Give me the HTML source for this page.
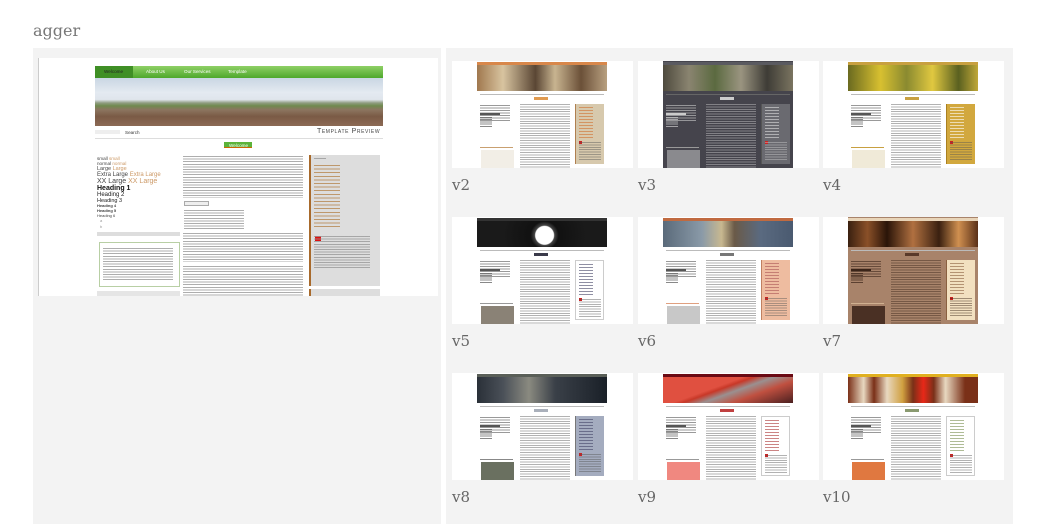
<!DOCTYPE html>
<html><head><meta charset="utf-8"><style>
*{margin:0;padding:0;box-sizing:border-box}
body{width:1043px;height:524px;background:#fff;position:relative;overflow:hidden;font-family:"Liberation Sans",sans-serif}
.title{position:absolute;left:33px;top:21px;font:16px "DejaVu Serif","Liberation Serif",serif;color:#777}
.panel{position:absolute;background:#f3f3f3;top:48px;height:476px}
.abs{position:absolute}
.t{font-size:4.6px;line-height:5.2px;color:#444}
.lines{background:repeating-linear-gradient(#999 0 1px,transparent 1px 2.6px);opacity:.8}
.th{position:absolute;width:181px;height:107px;background:#fff;overflow:hidden}
.lab{position:absolute;font:15px "DejaVu Serif","Liberation Serif",serif;color:#666}
.pg{position:absolute;left:25px;top:0;width:130px;height:107px;background:var(--bg)}
.pg .nav{position:absolute;left:0;top:1px;width:130px;height:3px;background:var(--nav)}
.pg .hd{position:absolute;left:0;top:4px;width:130px;height:26px;background:var(--hdr)}
.pg .sr{position:absolute;left:3px;top:33px;width:124px;height:1px;background:#bbb}
.pg .tab{position:absolute;left:57px;top:36px;width:14px;height:3px;background:var(--tab)}
.pg .l1{position:absolute;left:3px;top:44px;width:30px;height:16px;background:repeating-linear-gradient(var(--tx) 0 1px,transparent 1px 2.5px);opacity:.6}
.pg .h1{position:absolute;left:3px;top:52px;width:20px;height:2px;background:var(--tx)}
.pg .l2{position:absolute;left:3px;top:56px;width:12px;height:11px;background:repeating-linear-gradient(var(--tx) 0 1px,transparent 1px 2.2px);opacity:.7}
.pg .bar{position:absolute;left:3px;top:86px;width:33px;height:1px;background:#999}
.pg .box{position:absolute;left:4px;top:89px;width:33px;height:18px;background:var(--box)}
.pg .mid{position:absolute;left:43px;top:43px;width:50px;height:64px;background:repeating-linear-gradient(var(--tx) 0 1px,transparent 1px 2.4px);opacity:.45}
.pg .sd{position:absolute;left:98px;top:43px;width:29px;height:60px;background:var(--side);border-left:1px solid var(--sb)}
.pg .sd i{position:absolute;left:3px;top:3px;width:14px;height:32px;background:repeating-linear-gradient(var(--lk) 0 1px,transparent 1px 3px);opacity:.6}
.pg .sd b{position:absolute;left:3px;top:38px;width:22px;height:18px;background:repeating-linear-gradient(var(--tx) 0 1px,transparent 1px 2.4px);opacity:.45}
.pg .sd u{position:absolute;left:3px;top:37px;width:3px;height:3px;background:#c22}
</style></head><body>
<div class="title">agger</div>
<div class="panel" style="left:33px;width:408px"></div>
<div class="panel" style="left:446px;width:567px"></div>

<div class="abs" style="left:38px;top:58px;width:400px;height:238px;background:#fff;border-left:1px solid #ccc"></div>
<div class="abs" style="left:95px;top:66px;width:288px;height:12px;background:linear-gradient(#8fd066,#4ea82c)"></div>
<div class="abs" style="left:95px;top:66px;width:38px;height:12px;background:#3f8f25"></div>
<div class="abs t" style="left:104px;top:69px;color:#222">Welcome</div>
<div class="abs t" style="left:146px;top:69px;color:#fff">About Us</div>
<div class="abs t" style="left:184px;top:69px;color:#fff">Our Services</div>
<div class="abs t" style="left:228px;top:69px;color:#fff">Template</div>
<div class="abs" style="left:95px;top:78px;width:288px;height:48px;background:linear-gradient(#c9d6e3 0%,#e4eaf1 30%,#dfe5ec 45%,#8f9c80 52%,#6f8a4e 58%,#8c7560 66%,#7a5a45 80%,#8c6a55 100%)"></div>
<div class="abs" style="left:95px;top:130px;width:25px;height:4px;background:#eee"></div>
<div class="abs t" style="left:125px;top:130px;color:#333">Search</div>
<div class="abs" style="left:317px;top:128px;font-size:7px;letter-spacing:.6px;color:#444;font-variant:small-caps">Template Preview</div>
<div class="abs" style="left:95px;top:138px;width:288px;height:1px;background:#ddd"></div>
<div class="abs" style="left:224px;top:142px;width:28px;height:6px;background:#5cb33a;border-bottom:1px solid #c60"></div>
<div class="abs t" style="left:229px;top:143px;color:#fff">Welcome</div>
<div class="abs t" style="left:97px;top:156px;line-height:5px">small <span style="color:#c96">small</span><br>normal <span style="color:#c96">normal</span><br><span style="font-size:5.5px">Large <span style="color:#c96">Large</span></span><br><span style="font-size:6px">Extra Large <span style="color:#c96">Extra Large</span></span><br><span style="font-size:7px;line-height:7px">XX Large <span style="color:#c96">XX Large</span></span></div>
<div class="abs" style="left:97px;top:185px;font-size:7px;font-weight:bold;color:#111">Heading 1</div>
<div class="abs" style="left:97px;top:192px;font-size:6px;color:#222">Heading 2</div>
<div class="abs" style="left:97px;top:198px;font-size:5.5px;color:#222">Heading 3</div>
<div class="abs t" style="left:97px;top:204px;font-weight:bold;line-height:4.5px;font-size:4px">Heading 4<br>Heading 5</div>
<div class="abs t" style="left:97px;top:213px;font-size:4px">Heading 6</div>
<div class="abs t" style="left:100px;top:218px;font-size:4px;line-height:6px;color:#999">a<br>b</div>
<div class="abs" style="left:97px;top:232px;width:83px;height:4px;background:#ddd"></div>
<div class="abs" style="left:99px;top:242px;width:81px;height:45px;border:1px solid #b8cfa4;background:#fff"></div>
<div class="abs lines" style="left:103px;top:248px;width:70px;height:32px"></div>
<div class="abs" style="left:97px;top:291px;width:83px;height:5px;background:#e5e5e5"></div>
<div class="abs lines" style="left:183px;top:156px;width:120px;height:42px"></div>
<div class="abs" style="left:184px;top:201px;width:25px;height:5px;background:#eee;border:1px solid #aaa"></div>
<div class="abs lines" style="left:184px;top:210px;width:60px;height:19px"></div>
<div class="abs lines" style="left:183px;top:233px;width:120px;height:29px"></div>
<div class="abs lines" style="left:183px;top:266px;width:120px;height:30px"></div>
<div class="abs" style="left:309px;top:155px;width:71px;height:131px;background:#ddd;border-left:2px solid #a86a2c"></div>
<div class="abs lines" style="left:314px;top:158px;width:12px;height:2px"></div>
<div class="abs" style="left:314px;top:165px;width:26px;height:64px;background:repeating-linear-gradient(#b07a3c 0 1px,transparent 1px 3.6px);opacity:.7"></div>
<div class="abs" style="left:315px;top:236px;width:6px;height:5px;background:#d11"></div>
<div class="abs lines" style="left:314px;top:236px;width:56px;height:34px"></div>
<div class="abs" style="left:309px;top:289px;width:71px;height:7px;background:#ddd;border-left:2px solid #a86a2c"></div>

<div class="th" style="left:452px;top:61px"><div class="pg" style="--bg:#fff;--nav:#d8874a;--hdr:linear-gradient(90deg,#a0784e,#d8c4a0 20%,#5a4634 45%,#c8b490 60%,#6b5038 80%,#b8a080);--tab:#e09a50;--tx:#555;--box:#f2eee6;--side:#d7c9ad;--sb:#b08050;--lk:#d07030"><div class="nav"></div><div class="hd"></div><div class="sr"></div><div class="tab"></div><div class="l1"></div><div class="h1"></div><div class="l2"></div><div class="bar" style="background:#c9a070"></div><div class="box"></div><div class="mid"></div><div class="sd"><i></i><u></u><b></b></div></div></div>
<div class="lab" style="left:452px;top:176px">v2</div>

<div class="th" style="left:638px;top:61px"><div class="pg" style="--bg:#45444c;--nav:#5a5a60;--hdr:linear-gradient(90deg,#4e4a3e,#8a8470 20%,#5b6a40 40%,#9a9480 60%,#3e3c36 80%,#7a7460);--tab:#ccc;--tx:#ccc;--box:#8a8a8e;--side:#6a6a70;--sb:#555;--lk:#ddd"><div class="nav"></div><div class="hd"></div><div class="sr" style="background:#666"></div><div class="tab"></div><div class="l1"></div><div class="h1"></div><div class="l2"></div><div class="bar"></div><div class="box"></div><div class="mid"></div><div class="sd"><i></i><u></u><b></b></div></div></div>
<div class="lab" style="left:638px;top:176px">v3</div>

<div class="th" style="left:823px;top:61px"><div class="pg" style="--bg:#fff;--nav:#c8a040;--hdr:linear-gradient(90deg,#6a6a20,#d8c030 25%,#8a8a30 45%,#e0c840 65%,#5a6020 85%,#c0a838);--tab:#c8a040;--tx:#555;--box:#f0ead8;--side:#d2a83e;--sb:#aa8020;--lk:#fff"><div class="nav"></div><div class="hd"></div><div class="sr"></div><div class="tab"></div><div class="l1"></div><div class="h1"></div><div class="l2"></div><div class="bar" style="background:#c8a040"></div><div class="box"></div><div class="mid"></div><div class="sd"><i></i><u></u><b></b></div></div></div>
<div class="lab" style="left:823px;top:176px">v4</div>

<div class="th" style="left:452px;top:217px"><div class="pg" style="--bg:#fff;--nav:#333;--hdr:radial-gradient(circle at 52% 55%,#fff 0 9px,#444 10px,#111 14px,#1a1a1a 60%);--tab:#3a3a4a;--tx:#555;--box:#8a8276;--side:#fff;--sb:#888;--lk:#446"><div class="nav"></div><div class="hd"></div><div class="sr"></div><div class="tab"></div><div class="l1"></div><div class="h1"></div><div class="l2"></div><div class="bar"></div><div class="box"></div><div class="mid"></div><div class="sd" style="border:1px solid #ccc"><i></i><u></u><b></b></div></div></div>
<div class="lab" style="left:452px;top:332px">v5</div>

<div class="th" style="left:638px;top:217px"><div class="pg" style="--bg:#fff;--nav:#c06a40;--hdr:linear-gradient(90deg,#5a6a7a,#8a9aa8 30%,#c8b890 45%,#6a5a48 55%,#5a6a80 75%,#4a5a70);--tab:#777;--tx:#555;--box:#c8c8c8;--side:#eebca0;--sb:#c08060;--lk:#a55"><div class="nav"></div><div class="hd"></div><div class="sr"></div><div class="tab"></div><div class="l1"></div><div class="h1"></div><div class="l2"></div><div class="bar" style="background:#e0a080"></div><div class="box"></div><div class="mid"></div><div class="sd"><i></i><u></u><b></b></div></div></div>
<div class="lab" style="left:638px;top:332px">v6</div>

<div class="th" style="left:823px;top:217px"><div class="pg" style="--bg:#a8836a;--nav:#e8d4b8;--hdr:linear-gradient(90deg,#3a2010,#8a5028 15%,#2a1408 30%,#b07040 50%,#3a2010 70%,#d09050 85%,#5a3018);--tab:#5a3a2a;--tx:#3a2418;--box:#4a3024;--side:#f2e0c0;--sb:#8a6040;--lk:#8a6040"><div class="nav"></div><div class="hd"></div><div class="sr"></div><div class="tab"></div><div class="l1"></div><div class="h1"></div><div class="l2"></div><div class="bar" style="background:#d0b090"></div><div class="box"></div><div class="mid"></div><div class="sd"><i></i><u></u><b></b></div></div></div>
<div class="lab" style="left:823px;top:332px">v7</div>

<div class="th" style="left:452px;top:373px"><div class="pg" style="--bg:#fff;--nav:#5a5f58;--hdr:linear-gradient(90deg,#2a3038,#4a5058 20%,#8a8a80 40%,#3a4048 60%,#2a3038 80%,#1a2028);--tab:#aab0bb;--tx:#555;--box:#6a7060;--side:#a4acbf;--sb:#777;--lk:#446"><div class="nav"></div><div class="hd"></div><div class="sr"></div><div class="tab"></div><div class="l1"></div><div class="h1"></div><div class="l2"></div><div class="bar" style="background:#888"></div><div class="box"></div><div class="mid"></div><div class="sd"><i></i><u></u><b></b></div></div></div>
<div class="lab" style="left:452px;top:488px">v8</div>

<div class="th" style="left:638px;top:373px"><div class="pg" style="--bg:#fff;--nav:#6a0a14;--hdr:linear-gradient(160deg,#e05040 0 40%,#c83828 45%,#9a9090 55%,#c05040 70%,#4a2020);--tab:#c04040;--tx:#555;--box:#f08880;--side:#fff;--sb:#aaa;--lk:#a33"><div class="nav"></div><div class="hd"></div><div class="sr"></div><div class="tab"></div><div class="l1"></div><div class="h1"></div><div class="l2"></div><div class="bar"></div><div class="box"></div><div class="mid"></div><div class="sd" style="border:1px solid #ccc"><i></i><u></u><b></b></div></div></div>
<div class="lab" style="left:638px;top:488px">v9</div>

<div class="th" style="left:823px;top:373px"><div class="pg" style="--bg:#fff;--nav:#e0b020;--hdr:linear-gradient(90deg,#7a3018,#e8d8c0 12%,#7a3018 20%,#e8d8c0 30%,#d0a040 42%,#7a3018 50%,#e82818 58%,#7a3018 66%,#e8d8c0 75%,#7a3018 90%);--tab:#8a9a70;--tx:#555;--box:#e07840;--side:#fff;--sb:#aaa;--lk:#7a9050"><div class="nav"></div><div class="hd"></div><div class="sr"></div><div class="tab"></div><div class="l1"></div><div class="h1"></div><div class="l2"></div><div class="bar"></div><div class="box"></div><div class="mid"></div><div class="sd" style="border:1px solid #ccc"><i></i><u></u><b></b></div></div></div>
<div class="lab" style="left:823px;top:488px">v10</div>
</body></html>
